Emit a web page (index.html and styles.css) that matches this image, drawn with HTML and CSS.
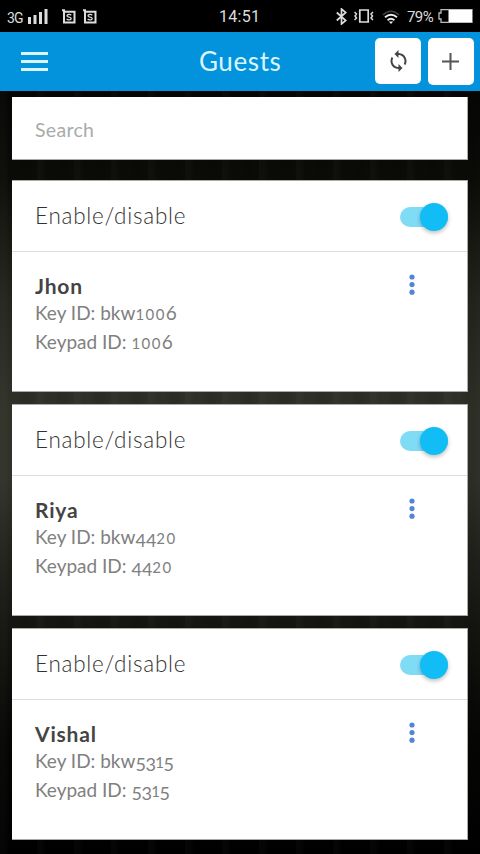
FILE: index.html
```html
<!DOCTYPE html>
<html lang="en">
<head>
<meta charset="utf-8">
<title>Guests</title>
<link rel="stylesheet" href="styles.css">
</head>
<body>
<div class="status">
  <span class="net">3G</span>
  <svg class="signal" width="20" height="16" viewBox="0 0 20 16" fill="#ddd"><path d="M0 9h3v7H0zM5.500 7h3v9h-3zM11 4h3v12h-3zM16.500 1h3v15h-3z"/></svg>
  <svg class="sim" width="14" height="16" viewBox="0 0 14 16"><path d="M2 2v11.500h10.500V2.700H3M0 1.200h3" fill="none" stroke="#ddd" stroke-width="2"/><path d="M9.300 6.200C8 5 4.800 5.300 5 7c.2 1.500 4.200.7 4.200 2.500 0 1.800-3.200 1.800-4.600.6" fill="none" stroke="#ddd" stroke-width="1.300"/></svg>
  <svg class="sim" width="14" height="16" viewBox="0 0 14 16"><path d="M2 2v11.500h10.500V2.700H3M0 1.200h3" fill="none" stroke="#ddd" stroke-width="2"/><path d="M9.300 6.200C8 5 4.800 5.300 5 7c.2 1.500 4.200.7 4.200 2.500 0 1.800-3.200 1.800-4.600.6" fill="none" stroke="#ddd" stroke-width="1.300"/></svg>
  <span class="clock">14:51</span>
  <svg class="bt" width="11" height="17" viewBox="0 0 11 17"><path d="M.8 4.500l9 8L5.500 16V1l4.300 3.500-9 8" fill="none" stroke="#ddd" stroke-width="1.700"/></svg>
  <svg class="vibrate" width="20" height="14" viewBox="0 0 20 14" fill="none" stroke="#ddd"><path d="M5.800 1h8.400v12H5.800z" stroke-width="1.700"/><path d="M.5 3l2 2-1.500 2 1.500 2-2 2M19 3l-2 2 1.500 2L17 9l2 2" stroke-width="1.500"/></svg>
  <svg class="wifi" width="18" height="14" viewBox="0 0 18 14" fill="none"><path d="M1 5Q9-2.500 17 5" stroke="#444" stroke-width="1.600"/><path d="M3 7.300q6-5 12 0M5.600 10.200q3.400-2.800 6.800 0" stroke="#eee" stroke-width="1.900"/><path d="M6.800 11.500h4.400L9 14z" fill="#eee"/></svg>
  <span class="percent">79%</span>
  <svg class="battery" width="35" height="14" viewBox="0 0 35 14"><path d="M3 .7h31v12.600H3V10H1V4h2z" fill="none" stroke="#bbb" stroke-width="1.300"/><path d="M10.500 1H34v12H10.500z" fill="#fff"/></svg>
</div>
<header class="bar">
  <svg class="menu" width="27" height="20" viewBox="0 0 27 20" fill="#d9f6ff"><path d="M0 0h27v3H0zM0 8h27v3H0zM0 16h27v3H0z"/></svg>
  <h1>Guests</h1>
  <button class="btn" aria-label="Refresh"><svg width="25" height="24" viewBox="0 0 24 24" fill="#444"><path d="M12 4V1L8 5l4 4V6c3.310 0 6 2.690 6 6 0 1.010-.25 1.970-.7 2.800l1.460 1.460C19.540 15.030 20 13.570 20 12c0-4.420-3.580-8-8-8zm0 14c-3.310 0-6-2.690-6-6 0-1.010.25-1.970.7-2.800L5.240 7.740C4.460 8.970 4 10.430 4 12c0 4.420 3.580 8 8 8v3l4-4-4-4v3z"/></svg></button>
  <button class="btn add" aria-label="Add"><svg width="18" height="18" viewBox="0 0 18 18"><path d="M8.500 0v17M0 8.500h17" stroke="#555" stroke-width="2"/></svg></button>
</header>
<main>
  <div class="search"><span>Search</span></div>
  <section class="card">
    <div class="toggle"><span class="label">Enable/disable</span><span class="switch"></span></div>
    <div class="guest"><div><h2>Jhon</h2><p>Key ID: bkw<span class="mid">100</span>6</p><p>Keypad ID: <span class="mid">100</span>6</p></div>
    <svg class="more" width="6" height="22" viewBox="0 0 6 22" fill="#5285d8"><circle cx="3" cy="3" r="2.600"/><circle cx="3" cy="10.600" r="2.600"/><circle cx="3" cy="18.200" r="2.600"/></svg></div>
  </section>
  <section class="card">
    <div class="toggle"><span class="label">Enable/disable</span><span class="switch"></span></div>
    <div class="guest"><div><h2>Riya</h2><p>Key ID: bkw<span class="low">44</span><span class="mid">20</span></p><p>Keypad ID: <span class="low">44</span><span class="mid">20</span></p></div>
    <svg class="more" width="6" height="22" viewBox="0 0 6 22" fill="#5285d8"><circle cx="3" cy="3" r="2.600"/><circle cx="3" cy="10.600" r="2.600"/><circle cx="3" cy="18.200" r="2.600"/></svg></div>
  </section>
  <section class="card">
    <div class="toggle"><span class="label">Enable/disable</span><span class="switch"></span></div>
    <div class="guest"><div><h2>Vishal</h2><p>Key ID: bkw<span class="low narrow">53</span><span class="mid narrow">1</span><span class="low">5</span></p><p>Keypad ID: <span class="low narrow">53</span><span class="mid narrow">1</span><span class="low">5</span></p></div>
    <svg class="more" width="6" height="22" viewBox="0 0 6 22" fill="#5285d8"><circle cx="3" cy="3" r="2.600"/><circle cx="3" cy="10.600" r="2.600"/><circle cx="3" cy="18.200" r="2.600"/></svg></div>
  </section>
</main>
</body>
</html>
```
FILE: styles.css
```css
* { box-sizing: border-box; }
body {
  margin: 0;
  height: 854px;
  overflow: hidden;
  font-family: Lato, "Liberation Sans", sans-serif;
  background:
    repeating-linear-gradient(90deg, rgba(255,255,230,.02) 0 5px, transparent 9px 17px, rgba(0,0,0,.08) 23px 29px, transparent 37px),
    linear-gradient(#050604 90px, #0b0c08 180px, #24261d 300px, #303229 410px, #303128 480px, #20211b 560px, #141510 630px, #050604 740px, #000 854px);
}
.status {
  display: flex;
  height: 32px;
  background: #000;
  color: #ddd;
  font: 15px/32px Roboto, sans-serif;
}
.status svg { flex: none; }
.net { width: 21px; margin-left: 7px; padding-top: 2px; font-size: 14px; letter-spacing: -.8px; }
.signal { margin-top: 8px; }
.sim { margin: 9px 0 0 7px; }
.signal + .sim { margin-left: 14px; }
.clock { width: 46px; margin: 1px 0 0 122px; font-size: 16px; letter-spacing: .3px; }
.bt { margin: 8px 0 0 71px; }
.vibrate { margin: 9px 0 0 7px; }
.wifi { margin: 10px 0 0 8px; }
.percent { width: 27px; margin: 1px 0 0 7px; font-size: 15px; letter-spacing: -.6px; }
.battery { margin: 9px 0 0 4px; }
.bar {
  display: flex;
  align-items: flex-start;
  height: 59px;
  background: #0293dc;
}
.menu { flex: none; margin: 20px 0 0 21px; }
h1 {
  width: 176px;
  margin: 12px 0 0 151px;
  color: #d9f6ff;
  font-weight: 400;
  font-size: 26px;
  line-height: 34px;
  letter-spacing: .6px;
}
.btn {
  display: flex;
  flex: none;
  align-items: center;
  justify-content: center;
  width: 46px;
  height: 46px;
  margin: 6px 0 0;
  padding: 0;
  border: 0;
  border-radius: 5px;
  background: #fff;
}
.add { height: 47px; margin-left: 7px; }
main { padding: 6px 12px 0; }
.search {
  height: 63px;
  margin-bottom: 20px;
  padding-left: 23px;
  border: 1px solid #aaa;
  border-width: 0 1px 1px 0;
  background: #fff;
  color: #aaa;
  font-size: 19.5px;
  line-height: 65px;
  letter-spacing: .3px;
}
.card {
  height: 212px;
  margin-bottom: 12px;
  border: 1px solid #aaa;
  border-width: 1px 1px 1px 0;
  background: #fff;
}
.toggle {
  display: flex;
  align-items: center;
  justify-content: space-between;
  height: 71px;
  padding: 0 19px 0 23px;
  border-bottom: 1px solid #ddd;
}
.label { padding-bottom: 2px; color: #333; font-weight: 300; font-size: 22.5px; letter-spacing: .75px; }
.switch {
  position: relative;
  width: 48px;
  height: 20px;
  margin-top: 1px;
  border-radius: 10px;
  background: #80dcf5;
}
.switch::after {
  content: "";
  position: absolute;
  top: -4px;
  right: 0;
  width: 28px;
  height: 28px;
  border-radius: 50%;
  background: #11bdf4;
  box-shadow: 0 2px 4px rgba(0,0,0,.25);
}
.guest {
  display: flex;
  justify-content: space-between;
  padding: 21px 52px 0 23px;
}
h2 { margin: 0; color: #444; font-size: 21px; line-height: 25px; letter-spacing: .8px; }
p { margin: 0; color: #808080; font-size: 19px; line-height: 29px; letter-spacing: 0; }
.mid { font-size: 15px; line-height: 0; letter-spacing: 1.4px; }
.low { font-size: 18px; line-height: 0; letter-spacing: 0; vertical-align: -3px; }
.narrow { letter-spacing: -.5px; }
.more { flex: none; margin-top: 1px; }
```
